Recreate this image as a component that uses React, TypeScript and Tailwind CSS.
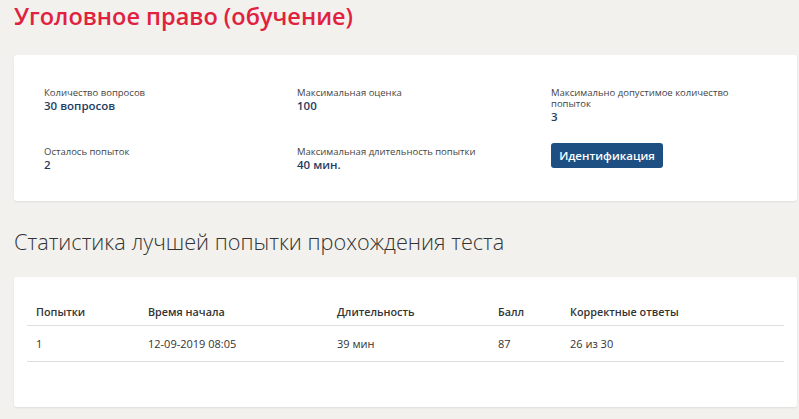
export default function App() {
  const rows = [{ n: "1", start: "12-09-2019 08:05", dur: "39 мин", score: "87", ok: "26 из 30" }];
  return (
    <div className="min-h-[419px] w-[799px] bg-[#f2f1ee] pl-[14px] pr-[2px] pt-[1px] text-[#333]" style={{ fontFamily: '"Open Sans", "Noto Sans", sans-serif' }}>
      <h1 className="text-[23.5px] font-semibold leading-[30px] text-[#e0223f]">Уголовное право (обучение)</h1>

      <div className="mt-[24px] h-[146px] rounded-[3px] bg-white pl-[30px] pt-[32px] shadow-[0_1px_2px_rgba(0,0,0,0.08)]">
        <div className="grid grid-cols-[253px_254px_1fr] gap-y-[22px]">
          <Field label="Количество вопросов" value="30 вопросов" />
          <Field label="Максимальная оценка" value="100" />
          <Field label={<>Максимально допустимое количество<br />попыток</>} value="3" />
          <Field label="Осталось попыток" value="2" />
          <Field label="Максимальная длительность попытки" value="40 мин." />
          <div className="-mt-[4px]">
            <button className="h-[25px] w-[112px] rounded-[3px] bg-[#1d4f82] text-[11.5px] font-semibold text-white">Идентификация</button>
          </div>
        </div>
      </div>

      <h2 className="mt-[27px] text-[21.7px] font-light leading-[28px] text-[#333]">Статистика лучшей попытки прохождения теста</h2>

      <div className="mt-[21px] h-[130px] rounded-[3px] bg-white px-[13px] pt-[28px] shadow-[0_1px_2px_rgba(0,0,0,0.08)]">
        <table className="w-full border-collapse text-left text-[11px]">
          <thead>
            <tr className="border-b border-[#ddd]">
              <th className="w-[121px] pb-[6px] pl-[9px] text-[10.8px] font-semibold leading-[14px]">Попытки</th>
              <th className="w-[189px] pb-[6px] text-[10.8px] font-semibold leading-[14px]">Время начала</th>
              <th className="w-[161px] pb-[6px] text-[10.8px] font-semibold leading-[14px]">Длительность</th>
              <th className="w-[72px] pb-[6px] text-[10.8px] font-semibold leading-[14px]">Балл</th>
              <th className="pb-[6px] text-[10.8px] font-semibold leading-[14px]">Корректные ответы</th>
            </tr>
          </thead>
          <tbody>
            {rows.map((r) => (
              <tr key={r.n} className="border-b border-[#ddd]">
                <td className="py-[9px] pl-[9px] leading-[17px]">{r.n}</td>
                <td className="py-[9px] leading-[17px]">{r.start}</td>
                <td className="py-[9px] leading-[17px]">{r.dur}</td>
                <td className="py-[9px] leading-[17px]">{r.score}</td>
                <td className="py-[9px] leading-[17px]">{r.ok}</td>
              </tr>
            ))}
          </tbody>
        </table>
      </div>
    </div>
  );
}

function Field({ label, value }: { label: React.ReactNode; value: string }) {
  return (
    <div>
      <div className="text-[9.5px] leading-[11px] text-[#444]">{label}</div>
      <div className="text-[11.5px] font-semibold leading-[15px] text-[#1f3d63]">{value}</div>
    </div>
  );
}
